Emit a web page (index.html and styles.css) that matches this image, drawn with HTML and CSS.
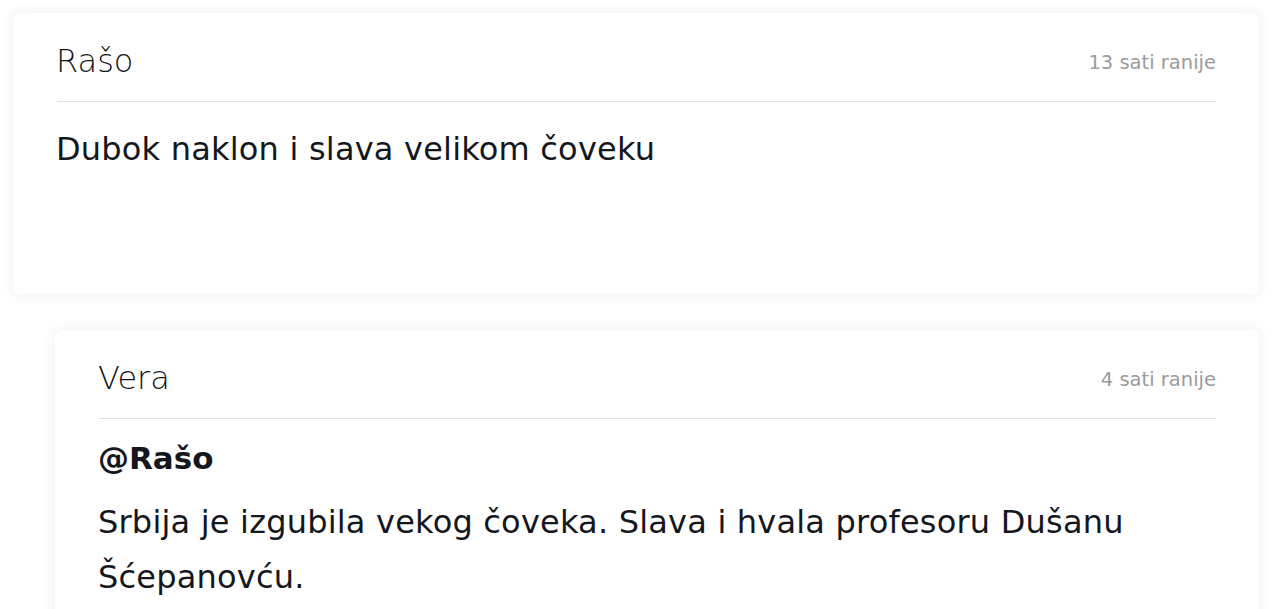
FILE: index.html
```html
<!DOCTYPE html>
<html lang="sr">
<head>
<meta charset="utf-8">
<title>Komentari</title>
<link rel="stylesheet" href="styles.css">
</head>
<body>
<div class="thread">
  <article class="comment">
    <header class="comment-head">
      <span class="author">Rašo</span>
      <span class="time">13 sati ranije</span>
    </header>
    <div class="comment-body comment-body--tall">
      <p class="text">Dubok naklon i slava velikom čoveku</p>
    </div>
  </article>
  <article class="comment comment--reply">
    <header class="comment-head">
      <span class="author">Vera</span>
      <span class="time">4 sati ranije</span>
    </header>
    <div class="comment-body comment-body--reply">
      <p class="mention">@Rašo</p>
      <p class="text">Srbija je izgubila vekog čoveka. Slava i hvala profesoru Dušanu Šćepanovću.</p>
    </div>
  </article>
</div>
</body>
</html>
```
FILE: styles.css
```css
html, body {
  margin: 0;
  padding: 0;
  background: #ffffff;
}
body {
  font-family: "DejaVu Sans", "Noto Sans", sans-serif;
  color: #15171c;
}
.thread {
  display: flex;
  flex-direction: column;
  gap: 36px;
  padding: 13px 21px 40px 13px;
}
.comment {
  background: #ffffff;
  border-radius: 8px;
  box-shadow: 0 0 16px rgba(0, 0, 0, 0.07);
  padding: 24px 43px 0 44px;
}
.comment--reply {
  margin-left: 42px;
}
.comment-head {
  display: flex;
  justify-content: space-between;
  align-items: center;
  height: 48px;
  padding-bottom: 16px;
  border-bottom: 1px solid #dde2e8;
}
.author {
  font-size: 32px;
  font-weight: 300;
  line-height: 48px;
  margin-left: -1px;
  color: #111318;
}
.time {
  font-size: 19.5px;
  font-weight: 400;
  color: #9b9b9b;
  padding-top: 2px;
}
.comment-body {
  padding-top: 20px;
}
.comment-body--tall {
  padding-bottom: 117px;
}
.comment-body--reply {
  padding-top: 12px;
  padding-bottom: 40px;
}
.text {
  margin: 0 0 0 -1px;
  font-size: 32px;
  letter-spacing: 0.2px;
  line-height: 55px;
}
.mention {
  margin: 0 0 9px -1px;
  font-size: 31px;
  font-weight: 700;
  line-height: 55px;
}
```
